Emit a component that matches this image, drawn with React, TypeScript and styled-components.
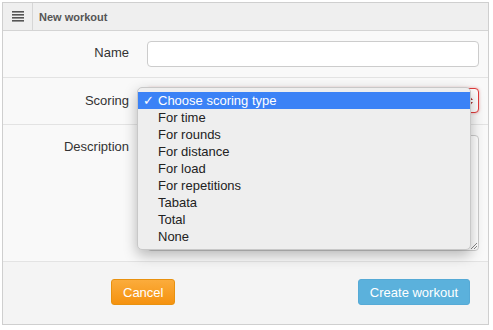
import React from "react";
import styled, { createGlobalStyle } from "styled-components";

const GlobalStyle = createGlobalStyle`
  body {
    margin: 0;
    background: #ffffff;
    font-family: "Liberation Sans", Arial, Helvetica, sans-serif;
  }
`;

const Page = styled.div`
  padding: 2px;
`;

const Panel = styled.div`
  width: 487px;
  height: 323px;
  box-sizing: border-box;
  border: 1px solid #cfcfcf;
  background: #f9f9f9;
  display: flex;
  flex-direction: column;
`;

const Header = styled.div`
  height: 27px;
  display: flex;
  align-items: stretch;
  background: #efefef;
  border-bottom: 1px solid #d4d4d4;
`;

const MenuCell = styled.div`
  width: 29px;
  display: flex;
  align-items: center;
  justify-content: center;
  border-right: 1px solid #d6d6d6;
  color: #555;
`;

const Title = styled.div`
  display: flex;
  align-items: center;
  padding-left: 6px;
  font-size: 11px;
  font-weight: bold;
  color: #555;
`;

const Row = styled.div<{ $height: number }>`
  position: relative;
  height: ${({ $height }) => $height}px;
  display: grid;
  grid-template-columns: 126px 1fr;
  column-gap: 18px;
  padding: 0 9px 0 0;
  border-bottom: 1px solid #e3e3e3;
`;

const Label = styled.label<{ $top: number }>`
  justify-self: end;
  padding-top: ${({ $top }) => $top}px;
  font-size: 13px;
  color: #333;
`;

const Field = styled.div<{ $top: number }>`
  padding-top: ${({ $top }) => $top}px;
`;

const TextInput = styled.div`
  height: 26px;
  box-sizing: border-box;
  border: 1px solid #cccccc;
  border-radius: 4px;
  background: #fff;
`;

const SelectBox = styled.div`
  height: 25px;
  box-sizing: border-box;
  border: 1px solid #e03b3b;
  border-radius: 4px;
  background: #fff;
  box-shadow: 0 0 3px rgba(224, 59, 59, 0.45);
  display: flex;
  justify-content: flex-end;
  align-items: center;
  padding-right: 4px;
`;

const TextArea = styled.div`
  position: relative;
  height: 116px;
  box-sizing: border-box;
  border: 1px solid #cccccc;
  border-radius: 4px;
  background: #fff;
`;

const Grip = styled.svg`
  position: absolute;
  right: 1px;
  bottom: 1px;
`;

const Menu = styled.ul`
  position: absolute;
  left: 134px;
  top: 9px;
  width: 332px;
  margin: 0;
  padding: 4px 0;
  list-style: none;
  background: #eeeeee;
  border: 1px solid #c8c8c8;
  border-radius: 5px;
  box-shadow: 0 5px 14px rgba(0, 0, 0, 0.28);
  z-index: 5;
`;

const MenuItem = styled.li<{ $active?: boolean }>`
  position: relative;
  height: 17px;
  line-height: 17px;
  padding-left: 20px;
  font-size: 13px;
  color: ${({ $active }) => ($active ? "#fff" : "#222")};
  background: ${({ $active }) => ($active ? "#3b82f6" : "transparent")};
`;

const Check = styled.span`
  position: absolute;
  left: 5px;
  top: 0;
  font-family: "DejaVu Sans", sans-serif;
  font-size: 13px;
  font-weight: bold;
`;

const Footer = styled.div`
  flex: 1;
  background: #f4f4f4;
  display: flex;
  justify-content: space-between;
  align-items: flex-start;
  padding: 17px 18px 0 108px;
`;

const Button = styled.button<{ $variant: "cancel" | "primary" }>`
  height: 26px;
  box-sizing: border-box;
  border-radius: 3px;
  font-family: inherit;
  font-size: 13px;
  color: #fff;
  margin: 0;
  padding: 0 11px;
  cursor: pointer;
  border: 1px solid
    ${({ $variant }) => ($variant === "cancel" ? "#e8910f" : "#56aad6")};
  background: ${({ $variant }) =>
    $variant === "cancel"
      ? "linear-gradient(#fbac3c, #f5920f)"
      : "#5bb1dc"};
`;

const options = [
  "For time",
  "For rounds",
  "For distance",
  "For load",
  "For repetitions",
  "Tabata",
  "Total",
  "None",
];

export default function App() {
  return (
    <Page>
      <GlobalStyle />
      <Panel>
        <Header>
          <MenuCell>
            <svg width="12" height="11" viewBox="0 0 12 11">
              <rect x="0" y="0" width="12" height="1.6" fill="#555" />
              <rect x="0" y="3" width="12" height="1.6" fill="#555" />
              <rect x="0" y="6" width="12" height="1.6" fill="#555" />
              <rect x="0" y="9" width="12" height="1.6" fill="#555" />
            </svg>
          </MenuCell>
          <Title>New workout</Title>
        </Header>

        <Row $height={46}>
          <Label $top={14}>Name</Label>
          <Field $top={10}>
            <TextInput />
          </Field>
        </Row>

        <Row $height={46}>
          <Label $top={15}>Scoring</Label>
          <Field $top={10}>
            <SelectBox>
              <svg width="8" height="12" viewBox="0 0 8 12">
                <path d="M1 5 L4 1.5 L7 5 Z" fill="#a33" />
                <path d="M1 7 L4 10.5 L7 7 Z" fill="#a33" />
              </svg>
            </SelectBox>
          </Field>
          <Menu>
            <MenuItem $active>
              <Check>✓</Check>
              Choose scoring type
            </MenuItem>
            {options.map((o) => (
              <MenuItem key={o}>{o}</MenuItem>
            ))}
          </Menu>
        </Row>

        <Row $height={136}>
          <Label $top={14}>Description</Label>
          <Field $top={10}>
            <TextArea>
              <Grip width="7" height="7" viewBox="0 0 7 7">
                <path d="M1 7 L7 1 M4 7 L7 4" stroke="#888" strokeWidth="1" />
              </Grip>
            </TextArea>
          </Field>
        </Row>

        <Footer>
          <Button $variant="cancel">Cancel</Button>
          <Button $variant="primary">Create workout</Button>
        </Footer>
      </Panel>
    </Page>
  );
}
